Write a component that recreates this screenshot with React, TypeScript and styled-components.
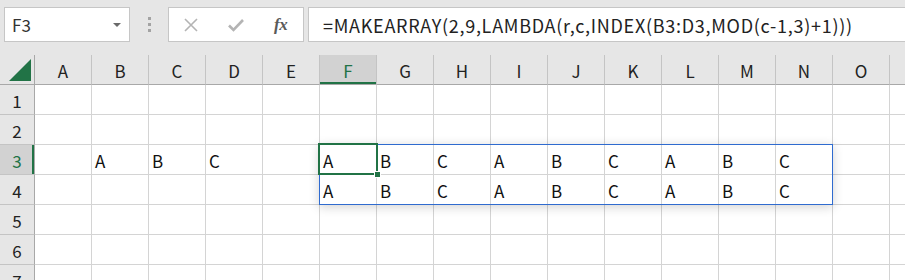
import React from 'react';
import styled, { createGlobalStyle } from 'styled-components';

const GlobalStyle = createGlobalStyle`
  html, body {
    margin: 0;
    padding: 0;
    background: #ffffff;
  }
  body {
    font-family: 'Noto Sans CJK JP', 'Noto Sans', sans-serif;
    color: #222;
  }
`;

const columns = ['A', 'B', 'C', 'D', 'E', 'F', 'G', 'H', 'I', 'J', 'K', 'L', 'M', 'N', 'O', 'P'];
const rowCount = 7;
const pattern = ['A', 'B', 'C'];

const cellValue = (row: number, col: number): string => {
  if (row === 3 && col >= 1 && col <= 3) return pattern[col - 1];
  if ((row === 3 || row === 4) && col >= 5 && col <= 13) return pattern[(col - 5) % 3];
  return '';
};

const ACTIVE_COL = 5;
const ACTIVE_ROW = 3;
const GREEN = '#217346';

const Page = styled.div`
  width: 905px;
  height: 280px;
  overflow: hidden;
  background: #e6e6e6;
`;

const Toolbar = styled.div`
  display: flex;
  align-items: flex-start;
  height: 55px;
  padding: 7px 0 0 4px;
  box-sizing: border-box;
`;

const NameBox = styled.div`
  position: relative;
  width: 126px;
  height: 35px;
  box-sizing: border-box;
  border: 1px solid #c6c6c6;
  background: #fff;
  display: flex;
  align-items: center;
  padding-left: 7px;
  font-size: 17px;
  color: #333;
`;

const DropArrow = styled.span`
  position: absolute;
  right: 8px;
  top: 15px;
  width: 0;
  height: 0;
  border-left: 4px solid transparent;
  border-right: 4px solid transparent;
  border-top: 4px solid #6a6a6a;
`;

const Grip = styled.div`
  width: 38px;
  height: 35px;
  display: flex;
  flex-direction: column;
  align-items: center;
  justify-content: center;
  gap: 3px;
`;

const GripDot = styled.span`
  width: 3px;
  height: 3px;
  background: #a3a3a3;
`;

const FxButtons = styled.div`
  width: 136px;
  height: 35px;
  box-sizing: border-box;
  border: 1px solid #c6c6c6;
  background: #fff;
  display: grid;
  grid-template-columns: 1fr 1fr 1fr;
  align-items: center;
  justify-items: center;
  margin-right: 4px;
`;

const IconSlot = styled.span`
  display: flex;
  align-items: center;
  justify-content: center;
  width: 40px;
`;

const FxLabel = styled.span`
  font-family: 'Liberation Serif', 'DejaVu Serif', serif;
  font-style: italic;
  font-weight: bold;
  font-size: 17px;
  color: #5a5a5a;
  letter-spacing: -0.5px;
`;

const FormulaBar = styled.div`
  flex: 1;
  height: 35px;
  box-sizing: border-box;
  border: 1px solid #c6c6c6;
  border-right: none;
  background: #fff;
  display: flex;
  align-items: center;
  padding-left: 14px;
  font-size: 18px;
  letter-spacing: 0.72px;
  color: #222;
  white-space: nowrap;
`;

const Sheet = styled.div`
  position: relative;
  display: grid;
  grid-template-columns: 35px repeat(${columns.length}, 57px);
  grid-auto-rows: 30px;
  background: #fff;
`;

const Corner = styled.div`
  position: relative;
  background: #e6e6e6;
  box-sizing: border-box;
  border-right: 1px solid #a8a8a8;
  border-bottom: 1px solid #a8a8a8;
`;

const CornerTriangle = styled.span`
  position: absolute;
  right: 3px;
  bottom: 3px;
  width: 0;
  height: 0;
  border-left: 22px solid transparent;
  border-bottom: 22px solid ${GREEN};
`;

const ColHeader = styled.div<{ $active?: boolean }>`
  background: ${(p) => (p.$active ? '#d2d2d2' : '#e6e6e6')};
  color: ${(p) => (p.$active ? GREEN : '#222')};
  box-sizing: border-box;
  border-right: 1px solid #c4c4c4;
  border-bottom: 1px solid #a8a8a8;
  box-shadow: ${(p) => (p.$active ? `inset 0 -2px 0 ${GREEN}` : 'none')};
  display: flex;
  align-items: center;
  justify-content: center;
  font-size: 17px;
  padding-top: 1px;
`;

const RowHeader = styled.div<{ $active?: boolean }>`
  background: ${(p) => (p.$active ? '#d2d2d2' : '#e6e6e6')};
  color: ${(p) => (p.$active ? GREEN : '#222')};
  box-sizing: border-box;
  border-right: 1px solid #a8a8a8;
  border-bottom: 1px solid #c4c4c4;
  box-shadow: ${(p) => (p.$active ? `inset -2px 0 0 ${GREEN}` : 'none')};
  display: flex;
  align-items: center;
  justify-content: center;
  font-size: 17px;
  padding-top: 1px;
`;

const Cell = styled.div`
  box-sizing: border-box;
  border-right: 1px solid #d4d4d4;
  border-bottom: 1px solid #d4d4d4;
  display: flex;
  align-items: center;
  padding: 1px 0 0 3px;
  font-size: 17px;
  color: #111;
`;

const SpillRange = styled.div`
  position: absolute;
  left: 319px;
  top: 89px;
  width: 514px;
  height: 61px;
  box-sizing: border-box;
  border: 1px solid #2f6bcf;
  box-shadow: 0 2px 10px rgba(0, 0, 0, 0.18);
  pointer-events: none;
`;

const ActiveCell = styled.div`
  position: absolute;
  left: 318px;
  top: 88px;
  width: 60px;
  height: 32px;
  box-sizing: border-box;
  border: 2px solid ${GREEN};
  pointer-events: none;
`;

const FillHandle = styled.div`
  position: absolute;
  left: 374px;
  top: 116px;
  width: 7px;
  height: 7px;
  box-sizing: border-box;
  background: ${GREEN};
  border: 1px solid #fff;
`;

const App: React.FC = () => {
  return (
    <Page>
      <GlobalStyle />
      <Toolbar>
        <NameBox>
          F3
          <DropArrow />
        </NameBox>
        <Grip>
          <GripDot />
          <GripDot />
          <GripDot />
        </Grip>
        <FxButtons>
          <IconSlot>
            <svg width="16" height="16" viewBox="0 0 16 16">
              <path d="M2 2 L14 14 M14 2 L2 14" stroke="#b4b4b4" strokeWidth="1.6" fill="none" />
            </svg>
          </IconSlot>
          <IconSlot>
            <svg width="18" height="16" viewBox="0 0 18 16">
              <path d="M2 8.5 L6.5 13 L16 3" stroke="#b4b4b4" strokeWidth="2.6" fill="none" />
            </svg>
          </IconSlot>
          <IconSlot>
            <FxLabel>fx</FxLabel>
          </IconSlot>
        </FxButtons>
        <FormulaBar>=MAKEARRAY(2,9,LAMBDA(r,c,INDEX(B3:D3,MOD(c-1,3)+1)))</FormulaBar>
      </Toolbar>
      <Sheet>
        <Corner>
          <CornerTriangle />
        </Corner>
        {columns.map((c, i) => (
          <ColHeader key={c} $active={i === ACTIVE_COL}>
            {i < columns.length - 1 ? c : ''}
          </ColHeader>
        ))}
        {Array.from({ length: rowCount }, (_, r) => {
          const row = r + 1;
          return (
            <React.Fragment key={row}>
              <RowHeader $active={row === ACTIVE_ROW}>{row}</RowHeader>
              {columns.map((c, col) => (
                <Cell key={c}>{cellValue(row, col)}</Cell>
              ))}
            </React.Fragment>
          );
        })}
        <SpillRange />
        <ActiveCell />
        <FillHandle />
      </Sheet>
    </Page>
  );
};

export default App;
